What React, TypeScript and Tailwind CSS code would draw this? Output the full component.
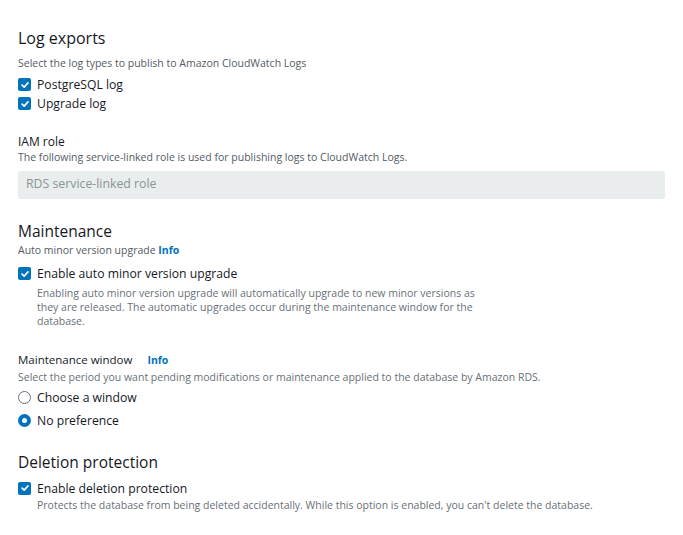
const font = { fontFamily: '"Open Sans", "Noto Sans", sans-serif' };

const Check = () => (
  <span className="flex h-[13px] w-[13px] shrink-0 items-center justify-center rounded-[2px] bg-[#0073bb]">
    <svg viewBox="0 0 12 12" className="h-[10px] w-[10px]">
      <path d="M2.5 6.2 L5 8.6 L9.6 3.4" fill="none" stroke="white" strokeWidth="2" strokeLinecap="round" strokeLinejoin="round" />
    </svg>
  </span>
);

const Radio = ({ on }: { on?: boolean }) =>
  on ? (
    <span className="h-[13px] w-[13px] shrink-0 rounded-full border-[4px] border-[#0073bb] bg-white" />
  ) : (
    <span className="h-[13px] w-[13px] shrink-0 rounded-full border border-[#687078] bg-white" />
  );

const Info = () => <span className="font-bold text-[#0073bb]">Info</span>;

export default function App() {
  return (
    <div style={font} className="min-h-[535px] w-[683px] bg-white px-[18px] pt-[27px] text-[#16191f]">
      <h2 className="text-[16px] leading-[22px]">Log exports</h2>
      <p className="mt-[7px] text-[10.5px] leading-[15px] text-[#545b64]">Select the log types to publish to Amazon CloudWatch Logs</p>
      <div className="mt-[5px] flex flex-col gap-[2px]">
        <label className="flex items-center gap-[6px] text-[12.2px] leading-[17px]">
          <Check />
          PostgreSQL log
        </label>
        <label className="flex items-center gap-[6px] text-[12.2px] leading-[17px]">
          <Check />
          Upgrade log
        </label>
      </div>

      <h3 className="mt-[21px] text-[12px] leading-[17px]">IAM role</h3>
      <p className="text-[10.5px] leading-[15px] text-[#545b64]">
        The following service-linked role is used for publishing logs to CloudWatch Logs.
      </p>
      <div className="mt-[5.5px] flex h-[28px] items-center rounded-[2px] bg-[#eaeded] px-[8px] text-[12.3px] text-[#879596]">
        RDS service-linked role
      </div>

      <h2 className="mt-[21px] text-[15.5px] leading-[22px]">Maintenance</h2>
      <p className="mt-[1.5px] text-[10.5px] leading-[15px] text-[#545b64]">
        Auto minor version upgrade <Info />
      </p>
      <label className="mt-[7px] flex items-center gap-[6px] text-[12.2px] leading-[17px]">
        <Check />
        Enable auto minor version upgrade
      </label>
      <p className="ml-[19px] mt-[3.5px] w-[450px] text-[10.5px] leading-[14px] text-[#687078]">
        Enabling auto minor version upgrade will automatically upgrade to new minor versions as they are released. The automatic upgrades occur during the maintenance window for the database.
      </p>

      <h3 className="mt-[23px] text-[11.5px] leading-[17px]">
        Maintenance window <span className="ml-[12px] text-[10.5px]"><Info /></span>
      </h3>
      <p className="mt-[1.5px] text-[10.5px] leading-[15px] text-[#687078]">
        Select the period you want pending modifications or maintenance applied to the database by Amazon RDS.
      </p>
      <div className="mt-[3.5px] flex flex-col gap-[6px]">
        <label className="flex items-center gap-[6px] text-[12.2px] leading-[17px]">
          <Radio />
          Choose a window
        </label>
        <label className="flex items-center gap-[6px] text-[12.2px] leading-[17px]">
          <Radio on />
          No preference
        </label>
      </div>

      <h2 className="mt-[22.5px] text-[15.5px] leading-[22px]">Deletion protection</h2>
      <label className="mt-[6.5px] flex items-center gap-[6px] text-[12.2px] leading-[17px]">
        <Check />
        Enable deletion protection
      </label>
      <p className="ml-[19px] mt-[1px] text-[10.5px] leading-[15px] text-[#687078]">
        Protects the database from being deleted accidentally. While this option is enabled, you can't delete the database.
      </p>
    </div>
  );
}
